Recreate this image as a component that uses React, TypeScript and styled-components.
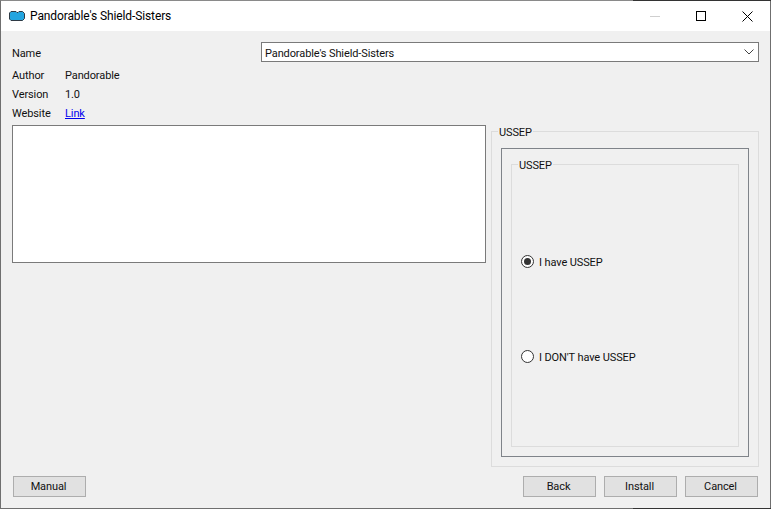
import React from "react";
import styled, { createGlobalStyle } from "styled-components";

const GlobalStyle = createGlobalStyle`
  html, body {
    margin: 0;
    padding: 0;
    background: #f0f0f0;
  }
  * {
    box-sizing: border-box;
  }
`;

const Window = styled.div`
  position: relative;
  width: 771px;
  height: 509px;
  display: flex;
  flex-direction: column;
  border: 1px solid #6f6f6f;
  border-top-color: #8a8a8a;
  background: #f0f0f0;
  color: #111;
  font-family: Roboto, sans-serif;
  font-size: 11px;
  letter-spacing: -0.11px;
  overflow: hidden;

  /* the dark part of the frame, where the window behind shows through */
  &::before,
  &::after {
    content: "";
    position: fixed;
    left: 633px;
    width: 138px;
    height: 1px;
    background: #333;
  }
  &::before {
    top: 0;
  }
  &::after {
    top: 508px;
  }
`;

const TitleBar = styled.div`
  height: 30px;
  flex: none;
  display: flex;
  align-items: center;
  background: #fff;
  padding-left: 8px;
`;

const TitleText = styled.span`
  margin-left: 5px;
  font-size: 12px;
  letter-spacing: -0.11px;
  color: #000;
`;

const WindowControls = styled.div`
  margin-left: auto;
  display: flex;
  height: 100%;
`;

const ControlButton = styled.div`
  width: 46px;
  height: 100%;
  display: flex;
  align-items: center;
  justify-content: center;
`;

const Content = styled.div`
  flex: 1;
  display: flex;
  flex-direction: column;
  padding: 11px;
  min-height: 0;
`;

const NameRow = styled.div`
  display: flex;
  align-items: center;
  justify-content: space-between;
  height: 20px;
`;

const Label = styled.span`
  width: 53px;
  flex: none;
`;

const NameLabel = styled(Label)`
  padding-top: 2px;
`;

const ComboBox = styled.div`
  width: 498px;
  height: 20px;
  display: flex;
  align-items: center;
  justify-content: space-between;
  padding: 0 4px 0 3px;
  background: #fff;
  border: 1px solid #7a7a7a;
`;

const ComboText = styled.span`
  padding-top: 2px;
`;

const InfoRows = styled.div`
  display: flex;
  flex-direction: column;
  margin-top: 3px;
`;

const InfoRow = styled.div`
  display: flex;
  align-items: center;
  height: 19px;
  padding-top: 2px;
`;

const LinkText = styled.a`
  color: #0000ee;
  text-decoration: underline;
`;

const Main = styled.div`
  flex: 1;
  display: flex;
  align-items: flex-start;
  justify-content: space-between;
  margin-top: 3px;
  min-height: 0;
`;

const Description = styled.div`
  width: 474px;
  height: 138px;
  background: #fff;
  border: 1px solid #7a7a7a;
`;

const OuterGroup = styled.fieldset`
  width: 268px;
  height: 342px;
  margin: 0;
  min-width: 0;
  padding: 10px 9px 9px;
  display: flex;
  flex-direction: column;
  border: 1px solid #dcdcdc;
`;

const InnerGroup = styled.fieldset`
  flex: 1;
  margin: 0;
  min-width: 0;
  padding: 83px 0 0 9px;
  display: flex;
  flex-direction: column;
  gap: 81px;
  border: 1px solid #dcdcdc;
`;

const GroupTitle = styled.legend`
  margin-left: -3px;
  padding: 2px 1px 0;
  line-height: 11px;
`;

const Frame = styled.div`
  flex: 1;
  display: flex;
  flex-direction: column;
  border: 1px solid #7f8389;
  padding: 9px 9px 9px;
`;

const RadioRow = styled.label`
  display: flex;
  align-items: center;
  gap: 5px;
  height: 14px;
`;

const RadioCircle = styled.span<{ $checked?: boolean }>`
  width: 13px;
  height: 13px;
  flex: none;
  display: flex;
  align-items: center;
  justify-content: center;
  border: 1px solid #333;
  border-radius: 50%;
  background: #fff;

  &::after {
    content: "";
    display: ${(props) => (props.$checked ? "block" : "none")};
    width: 7px;
    height: 7px;
    border-radius: 50%;
    background: #333;
  }
`;

const RadioText = styled.span`
  padding-top: 2px;
`;

const Footer = styled.div`
  flex: none;
  display: flex;
  justify-content: space-between;
  padding: 0 1px;
`;

const ButtonGroup = styled.div`
  display: flex;
  gap: 8px;
`;

const Button = styled.button`
  width: 73px;
  height: 21px;
  padding: 0 2px 0 0;
  background: #e1e1e1;
  border: 1px solid #adadad;
  border-radius: 0;
  color: #111;
  font: inherit;
  letter-spacing: inherit;
`;

const App: React.FC = () => {
  return (
    <>
      <GlobalStyle />
      <Window>
        <TitleBar>
          <svg width="16" height="10" viewBox="0 0 16 10">
            <path
              d="M0.500 2l1.500-1.500h5l1 1h1l1-1h3.500l2 2v5l-2 2h-11.500l-1.500-1.500z"
              fill="#23a5e0"
              stroke="#2f3a44"
            />
          </svg>
          <TitleText>Pandorable's Shield-Sisters</TitleText>
          <WindowControls>
            <ControlButton>
              <svg width="10" height="10" viewBox="0 0 10 10">
                <path d="M0 5.500h10" stroke="#cfcfcf" />
              </svg>
            </ControlButton>
            <ControlButton>
              <svg width="10" height="10" viewBox="0 0 10 10">
                <rect x="0.500" y="0.500" width="9" height="9" fill="none" stroke="#000" />
              </svg>
            </ControlButton>
            <ControlButton>
              <svg width="11" height="11" viewBox="0 0 11 11">
                <path d="M0.500 0.500l10 10M10.500 0.500l-10 10" stroke="#000" fill="none" />
              </svg>
            </ControlButton>
          </WindowControls>
        </TitleBar>
        <Content>
          <NameRow>
            <NameLabel>Name</NameLabel>
            <ComboBox>
              <ComboText>Pandorable's Shield-Sisters</ComboText>
              <svg width="10" height="6" viewBox="0 0 10 6">
                <path d="M0.500 0.500L5 5l4.500-4.500" stroke="#444" fill="none" />
              </svg>
            </ComboBox>
          </NameRow>
          <InfoRows>
            <InfoRow>
              <Label>Author</Label>
              <span>Pandorable</span>
            </InfoRow>
            <InfoRow>
              <Label>Version</Label>
              <span>1.0</span>
            </InfoRow>
            <InfoRow>
              <Label>Website</Label>
              <LinkText href="#">Link</LinkText>
            </InfoRow>
          </InfoRows>
          <Main>
            <Description />
            <OuterGroup>
              <GroupTitle>USSEP</GroupTitle>
              <Frame>
                <InnerGroup>
                  <GroupTitle>USSEP</GroupTitle>
                  <RadioRow>
                    <RadioCircle $checked />
                    <RadioText>I have USSEP</RadioText>
                  </RadioRow>
                  <RadioRow>
                    <RadioCircle />
                    <RadioText>I DON'T have USSEP</RadioText>
                  </RadioRow>
                </InnerGroup>
              </Frame>
            </OuterGroup>
          </Main>
          <Footer>
            <Button>Manual</Button>
            <ButtonGroup>
              <Button>Back</Button>
              <Button>Install</Button>
              <Button>Cancel</Button>
            </ButtonGroup>
          </Footer>
        </Content>
      </Window>
    </>
  );
};

export default App;
